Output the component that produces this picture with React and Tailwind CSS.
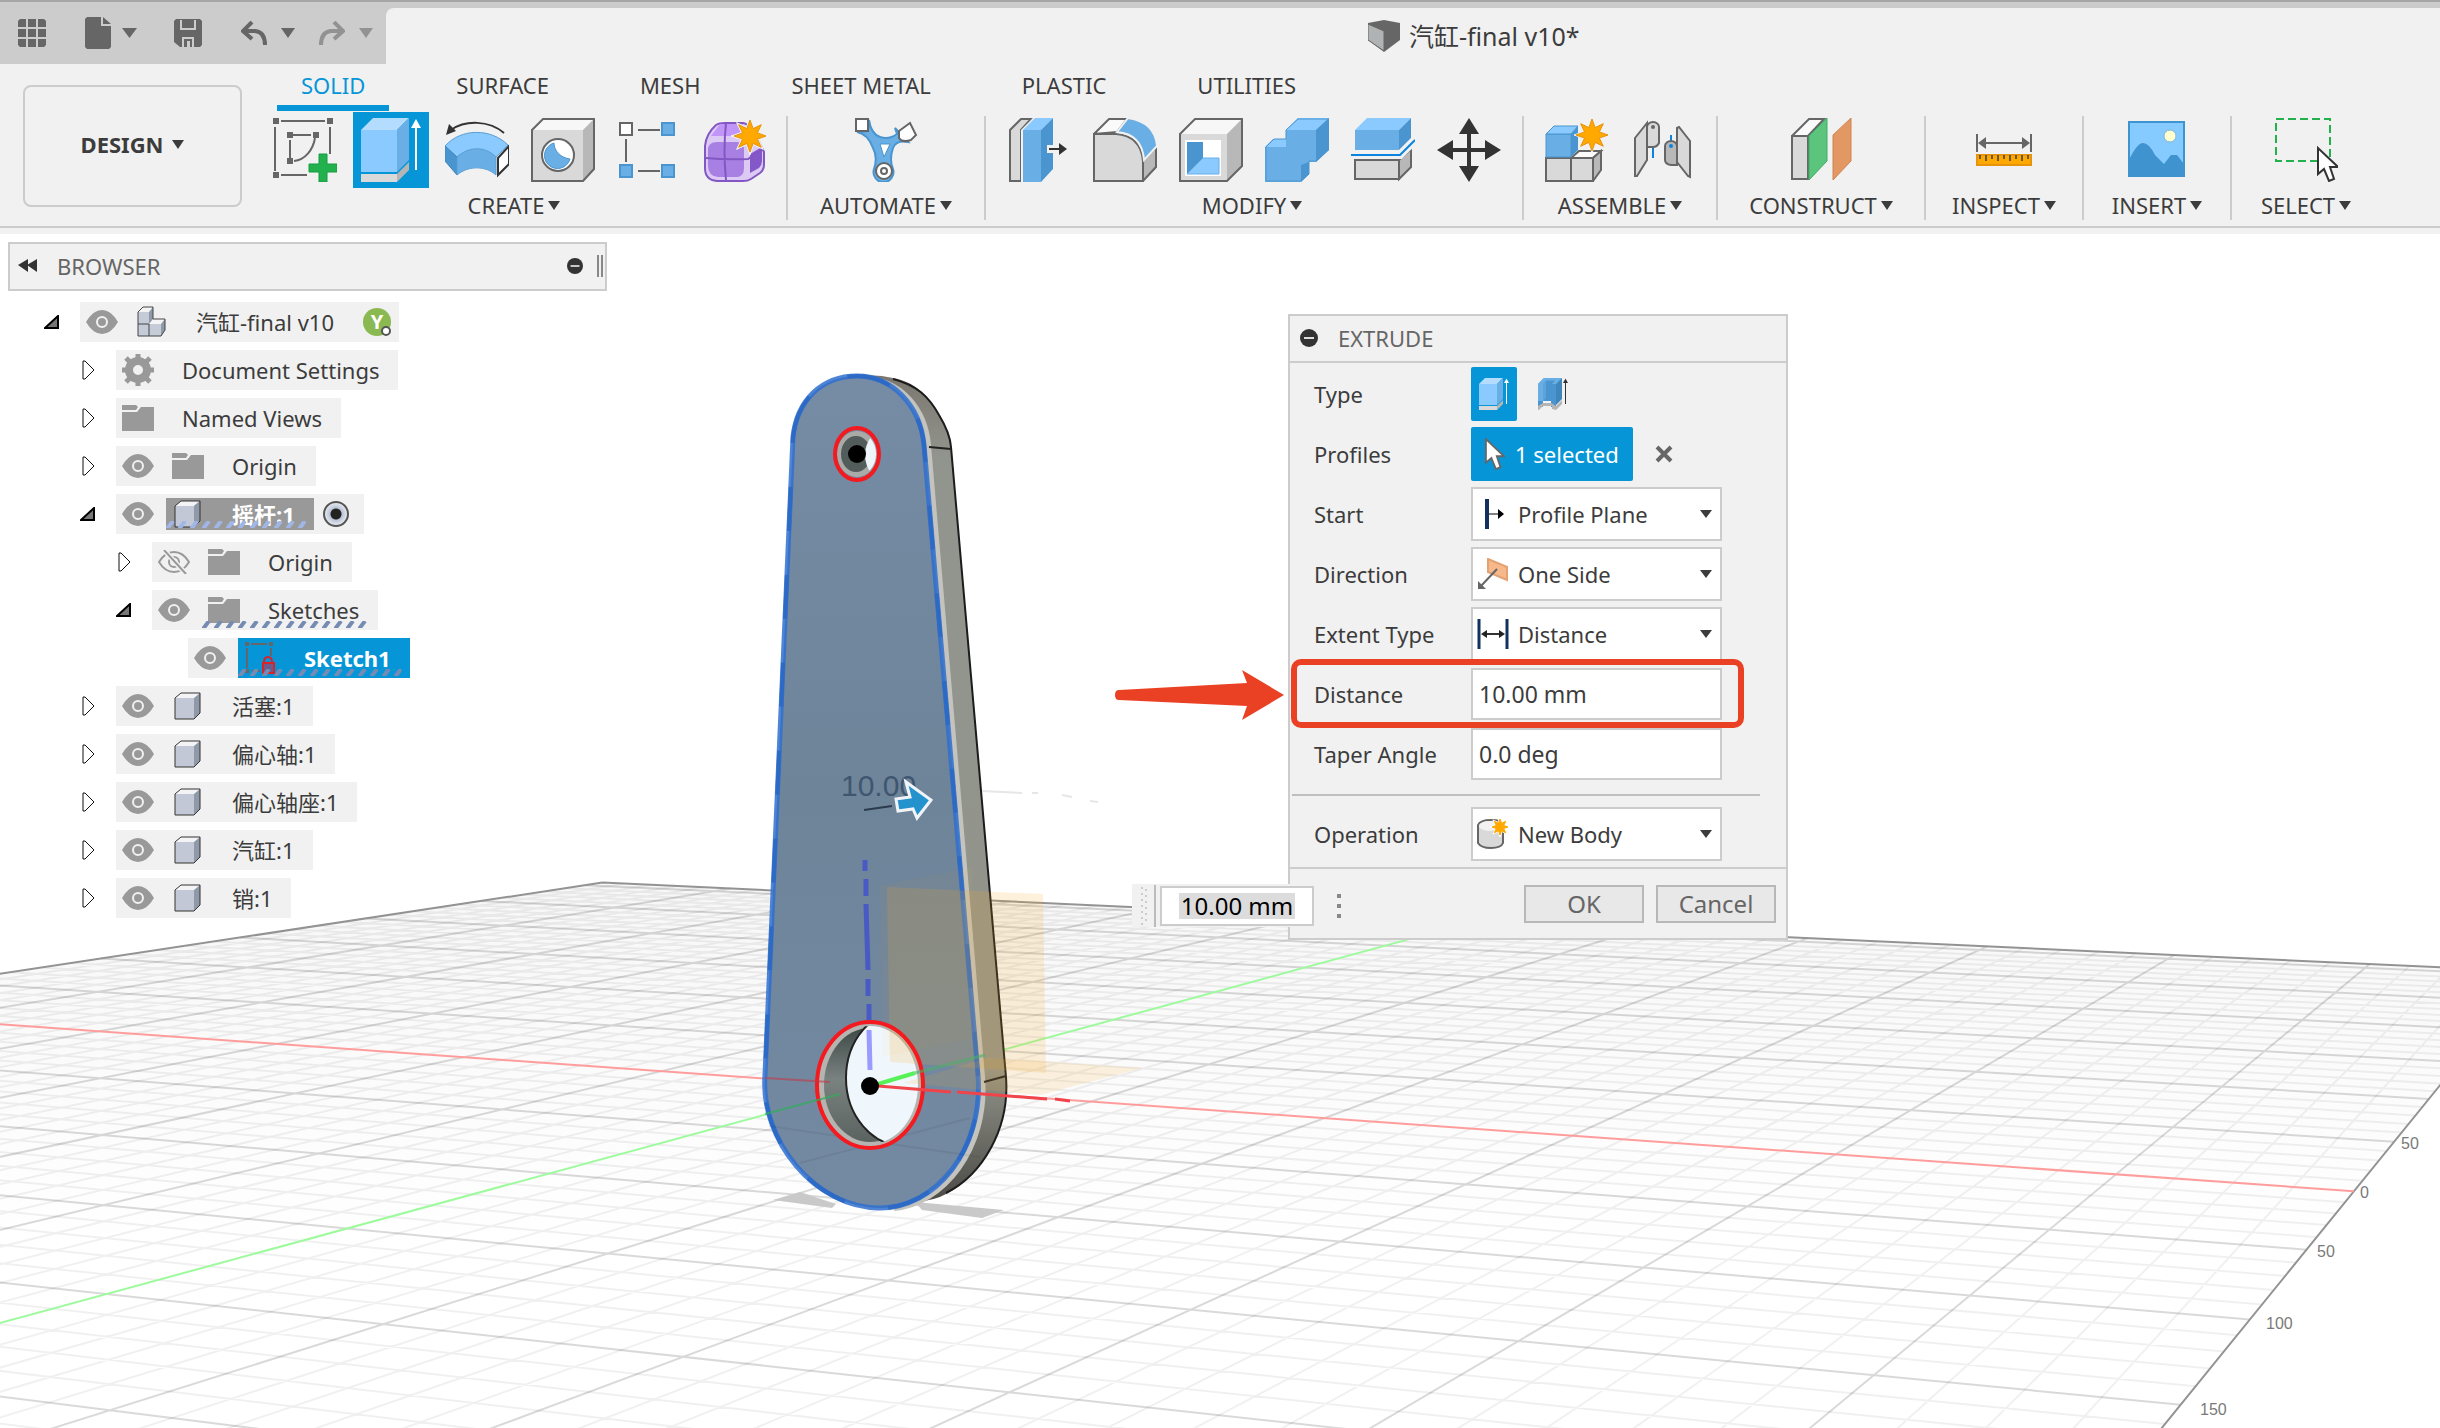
import React from "react";

/* ---------- shared drawing helpers ---------- */

function Star({ cx, cy, r, points = 8, fill = "#ffa800", stroke = "#e8930c", sw = 1 }) {
  const pts = [];
  for (let i = 0; i < points * 2; i++) {
    const a = (Math.PI * i) / points - Math.PI / 2;
    const d = i % 2 === 0 ? r : r * 0.5;
    pts.push(`${(cx + d * Math.cos(a)).toFixed(1)},${(cy + d * Math.sin(a)).toFixed(1)}`);
  }
  return <polygon points={pts.join(" ")} fill={fill} stroke={stroke} strokeWidth={sw} />;
}

function Icon({ children, className = "size-16", box = "0 0 64 64" }) {
  return (
    <svg viewBox={box} className={`${className} block shrink-0`} fill="none" aria-hidden="true">
      {children}
    </svg>
  );
}

const Caret = ({ className = "h-[9px] w-3" }) => (
  <svg viewBox="0 0 12 11" preserveAspectRatio="none" className={`${className} block shrink-0`} aria-hidden="true">
    <path d="M0 0h12l-6 11z" fill="currentColor" />
  </svg>
);

/* ---------- ribbon icons ---------- */

const SketchIcon = () => (
  <Icon>
    <path d="M8 3h44M2 9v44M8 57h26M57 9v27" stroke="#666" strokeWidth="2" />
    <path d="M20 17h18M17 22v18M42 20C40 32 32 42 21 43" stroke="#666" strokeWidth="2" />
    <path d="M0 0h6v6H0zM54 0h6v6h-6zM0 54h6v6H0zM14 14h6v6h-6zM40 14h6v6h-6zM14 40h6v6h-6z" fill="#666" />
    <path d="M46 36h8v10h10v8H54v10h-8V54H36v-8h10z" fill="#22b14c" stroke="#169b45" strokeWidth="1" />
  </Icon>
);
const ExtrudeIcon = ({ className, arrow = "#fff" }) => (
  <Icon className={className}>
    <path d="M2 12 14 0h36L38 12z" fill="#b3dcff" />
    <path d="M2 12h36v42H2z" fill="#8bcaff" />
    <path d="M38 12 50 0v42L38 54z" fill="#69afe5" />
    <path d="M2 56h36v8H2z" fill="#d9d9d9" />
    <path d="m38 56 12-12v8L38 64z" fill="#b5b5b5" />
    <path d="M57 8v44" stroke={arrow} strokeWidth="2" />
    <path d="m57 1 5 9H52z" fill={arrow} />
  </Icon>
);
const RevolveIcon = () => (
  <Icon>
    <path d="M0 28C16 10 46 10 63 27L51 39C40 29 24 29 12 39z" fill="#8bcaff" stroke="#5b9fd6" />
    <path d="M0 28 12 39v18L0 43z" fill="#4a95cf" stroke="#3f86bd" />
    <path d="M12 39C24 28 40 28 51 39v18C41 48 24 47 12 57z" fill="#69afe5" stroke="#5b9fd6" />
    <path d="m53 40 11-12v18L53 57z" fill="#fff" stroke="#333" strokeWidth="2" />
    <path d="M59 15C44 2 20 2 6 12" stroke="#333" strokeWidth="2" />
    <path d="m1 17 3-11 7 7z" fill="#333" />
  </Icon>
);
const HoleIcon = () => (
  <Icon>
    <path d="M1 12 12 1h51L52 12z" fill="#f7f7f7" />
    <path d="M52 12 63 1v50L52 63z" fill="#b8b8b8" />
    <path d="M1 12h51v51H1z" fill="#d9d9d9" />
    <path d="M1 12 12 1h51v50L52 63H1z" stroke="#666" strokeWidth="2" />
    <circle cx="27" cy="37" r="16" fill="#fff" stroke="#666" strokeWidth="2" />
    <path d="M23 25A13 13 0 1 0 39 41C30 40 23 33 23 25z" fill="#69afe5" stroke="#4a95cf" />
  </Icon>
);
const PatternIcon = () => (
  <Icon>
    <path d="M21 12h22M9 21v23M21 53h22" stroke="#666" strokeWidth="2" />
    <path d="M3 5h12v12H3z" fill="#fff" stroke="#666" strokeWidth="2" />
    <path d="M45 5h12v12H45zM3 47h12v12H3zM45 47h12v12H45z" fill="#69afe5" stroke="#4a95cf" strokeWidth="2" />
  </Icon>
);
const FormIcon = () => (
  <Icon>
    <path d="M2 28Q3 16 13 7q3-2 9-2h18q8 0 21 29v12q0 6-4 9l-9 6q-3 2-8 2H14Q2 62 2 50z" fill="#dccaf5" stroke="#8257c4" strokeWidth="2" />
    <path d="M8 18 17 6h23l-2 12z" fill="#c194f7" />
    <path d="M5 32q0-8 9-8h20q7 0 7 8v18q0 8-6 9H15Q5 58 5 48z" fill="#a880e3" />
    <path d="m47 36 12-7v14q0 4-3 7l-9 5z" fill="#8558c9" />
    <path d="M3 40q20 2 42 1l15-10M23 5q-3 28 0 57" stroke="#8257c4" strokeWidth="2" />
    <Star cx={47} cy={18} r={19} fill="#f1f1f1" stroke="#f1f1f1" />
    <Star cx={47} cy={18} r={16} />
  </Icon>
);
const AutomateIcon = () => (
  <Icon>
    <path d="M15 2Q17 16 26 19q9 3 17-3l-2-6 13 14q-12-2-15 6-4 12 0 21a10 10 0 1 1-19 0q4-12-1-21Q14 16 3 14l11-1z" fill="#69afe5" stroke="#4a95cf" strokeWidth="2" />
    <path d="M26 26h10l-6 13z" fill="#fff" stroke="#4a95cf" strokeWidth="1" />
    <path d="M2 1h12v12H2z" fill="#fff" stroke="#666" strokeWidth="2" />
    <path d="m45 13 11-8 6 12-5 5q-9 3-12-2z" fill="#fff" stroke="#666" strokeWidth="2" />
    <circle cx="30" cy="53" r="8" fill="#fff" stroke="#666" strokeWidth="2" />
    <circle cx="30" cy="53" r="3" fill="#fff" stroke="#666" strokeWidth="2" />
  </Icon>
);
const PressPullIcon = () => (
  <Icon>
    <path d="M3 12 14 1h10L14 12v51H3z" fill="#d9d9d9" stroke="#666" strokeWidth="2" />
    <path d="M14 12h2v52h-2zM14 12 26 0h2L16 12z" fill="#f1f1f1" />
    <path d="M16 12h18v52H16z" fill="#69afe5" />
    <path d="M16 12 28 0h18L34 12z" fill="#8bcaff" />
    <path d="M34 12 46 0v51L34 64z" fill="#4a95cf" />
    <path d="M40 27h9v-5l12 9-12 9v-5h-9z" fill="#f1f1f1" />
    <path d="M42 31h12" stroke="#333" strokeWidth="2" />
    <path d="m52 25 8 6-8 6z" fill="#333" />
  </Icon>
);
const FilletIcon = () => (
  <Icon>
    <path d="M1 16 16 1h18L24 14z" fill="#fafafa" stroke="#666" strokeWidth="2" />
    <path d="M1 16h22q25 2 27 27v20H1z" fill="#d9d9d9" stroke="#666" strokeWidth="2" />
    <path d="m50 42 13-13v20L50 63z" fill="#b8b8b8" stroke="#666" strokeWidth="2" />
    <path d="M24 14 35 0q27 4 29 28L51 42Q49 16 24 14z" fill="#69afe5" stroke="#f1f1f1" strokeWidth="2" />
  </Icon>
);
const ShellIcon = () => (
  <Icon>
    <path d="M1 16 16 1h47L48 16z" fill="#f7f7f7" />
    <path d="M48 16 63 1v47L48 63z" fill="#b8b8b8" />
    <path d="M1 16h47v47H1z" fill="#d9d9d9" />
    <path d="M1 16 16 1h47v47L48 63H1z" stroke="#666" strokeWidth="2" />
    <path d="M6 22h36v36H6z" fill="#fff" />
    <path d="M8 24h16v16L8 56z" fill="#4a95cf" />
    <path d="M24 40h16v16H8z" fill="#8bcaff" stroke="#69afe5" />
  </Icon>
);
const CombineIcon = () => (
  <Icon>
    <path d="M0 29 8 21h13V12L33 0h31v32L51 44h-7v12l-8 8H0z" fill="#69afe5" />
    <path d="M21 12 33 0h31L51 12zM0 29l8-8h13v8z" fill="#8bcaff" />
    <path d="M51 12 64 0v32L51 44zM36 47l8-3v12l-8 8z" fill="#4a95cf" />
    <path d="M1 29 9 21h12V12L33 1h30v31L51 43h-7v13l-8 7H1z" stroke="#4a95cf" strokeWidth="1" />
  </Icon>
);
const SplitIcon = () => (
  <Icon>
    <path d="M4 12 16 0h44L48 12z" fill="#8bcaff" />
    <path d="M4 12h44v20H4z" fill="#69afe5" />
    <path d="M48 12 60 0v20L48 32z" fill="#4a95cf" />
    <path d="M4 42h44v19H4z" fill="#d9d9d9" stroke="#666" strokeWidth="2" />
    <path d="m48 42 12-11v18L48 61z" fill="#b8b8b8" stroke="#666" strokeWidth="2" />
    <path d="M0 37h49l15-15" stroke="#f1f1f1" strokeWidth="8" />
    <path d="M0 37h49l15-15" stroke="#0a84e0" strokeWidth="2" />
  </Icon>
);
const MoveIcon = () => (
  <Icon>
    <path d="M32 8v48M8 32h48" stroke="#333" strokeWidth="4" />
    <path d="m32 0 10 16H22zM32 64 22 48h20zM0 32l16-10v20zM64 32 48 42V22z" fill="#333" />
  </Icon>
);
const AssembleIcon = () => (
  <Icon>
    <path d="M1 40h25v23H1z" fill="#d9d9d9" stroke="#666" strokeWidth="2" />
    <path d="M26 40 34 33h22l-8 7z" fill="#fafafa" stroke="#666" strokeWidth="2" />
    <path d="M26 40h22v23H26z" fill="#d9d9d9" stroke="#666" strokeWidth="2" />
    <path d="m48 40 8-7v19l-8 11z" fill="#b8b8b8" stroke="#666" strokeWidth="2" />
    <path d="M1 16h25v23H1z" fill="#69afe5" stroke="#4a95cf" />
    <path d="m1 16 8-8h24l-7 8z" fill="#8bcaff" stroke="#4a95cf" />
    <path d="m26 16 7-8v24l-7 7z" fill="#4a95cf" />
    <Star cx={47} cy={17} r={18} fill="#f1f1f1" stroke="#f1f1f1" />
    <Star cx={47} cy={17} r={16} />
  </Icon>
);
const JointIcon = () => (
  <Icon>
    <path d="m4 20 12-15v37L6 58H4z" fill="#d9d9d9" stroke="#666" strokeWidth="2" />
    <path d="M16 9a6 5 0 0 1 12 0v16q-2 4-6 4h-6z" fill="#d9d9d9" stroke="#666" strokeWidth="2" />
    <circle cx="22" cy="9" r="2" fill="#666" />
    <path d="M22 30v10M40 17v12" stroke="#0a84e0" strokeWidth="2" />
    <path d="m46 10 2-1 11 14v36l-2-1-11-14z" fill="#d9d9d9" stroke="#666" strokeWidth="2" />
    <path d="M34 28a6 5 0 0 1 12 0v19h-6q-6-1-6-5z" fill="#b8b8b8" stroke="#666" strokeWidth="2" />
    <circle cx="40" cy="28" r="2" fill="#0a84e0" />
  </Icon>
);
const ConstructIcon = () => (
  <Icon>
    <path d="M3 18 20 1h15L19 18v43H3z" fill="#fafafa" stroke="#666" strokeWidth="2" />
    <path d="M3 18h16v43H3z" fill="#d9d9d9" stroke="#666" strokeWidth="2" />
    <path d="M20 18 38 0v43L20 62z" fill="#5bc47d" stroke="#3fae66" />
    <path d="M44 17 62 0v43L44 62z" fill="#e39762" stroke="#cf8552" />
  </Icon>
);
const InspectIcon = () => (
  <Icon>
    <path d="M5 16v18M59 16v18M10 25h44" stroke="#666" strokeWidth="2" />
    <path d="m6 25 8-6v12zM58 25l-8-6v12z" fill="#666" />
    <path d="M5 37h54v10H5z" fill="#ffa800" stroke="#e8930c" strokeWidth="2" />
    <path d="M8 37v4M14 37v6M20 37v4M26 37v6M32 37v4M38 37v6M44 37v4M50 37v6M56 37v4" stroke="#6b5a35" strokeWidth="2" />
  </Icon>
);
const InsertIcon = () => (
  <Icon>
    <path d="M3 3h57v56H3z" fill="#86cbff" />
    <path d="M4 42q8-17 14-17 6 0 12 12l9 9 7-9h6l7 9v12H4z" fill="#3f93cf" />
    <circle cx="45" cy="18" r="6" fill="#ffffcf" stroke="#7fb7d8" strokeWidth="1" />
    <path d="M4 4h55v54H4z" stroke="#3f93cf" strokeWidth="2" />
  </Icon>
);
const CursorShape = () => <path d="M1 1v26l6-5 5 12 5-2-4-12h8z" />;
const SelectIcon = () => (
  <Icon>
    <path d="M2 1h54v42H2z" stroke="#22b14c" strokeWidth="2" strokeDasharray="8 4" />
    <g transform="translate(43 29)" fill="#fff" stroke="#333" strokeWidth="2">
      <CursorShape />
    </g>
  </Icon>
);

const GROUPS = [
  {
    label: "CREATE",
    width: "w-[534px]",
    nudge: "pr-3",
    icons: [
      ["Create Sketch", SketchIcon],
      ["Extrude", ExtrudeIcon, true],
      ["Revolve", RevolveIcon],
      ["Hole", HoleIcon],
      ["Rectangular Pattern", PatternIcon],
      ["Create Form", FormIcon],
    ],
  },
  { label: "AUTOMATE", width: "w-[198px]", icons: [["Automated Modeling", AutomateIcon]] },
  {
    label: "MODIFY",
    width: "w-[538px]",
    nudge: "pr-1",
    icons: [
      ["Press Pull", PressPullIcon],
      ["Fillet", FilletIcon],
      ["Shell", ShellIcon],
      ["Combine", CombineIcon],
      ["Split Body", SplitIcon],
      ["Move", MoveIcon],
    ],
  },
  {
    label: "ASSEMBLE",
    width: "w-[194px]",
    icons: [
      ["New Component", AssembleIcon],
      ["Joint", JointIcon],
    ],
  },
  { label: "CONSTRUCT", width: "w-[208px]", icons: [["Offset Plane", ConstructIcon]] },
  { label: "INSPECT", width: "w-[158px]", icons: [["Measure", InspectIcon]] },
  { label: "INSERT", width: "w-[148px]", icons: [["Insert Image", InsertIcon]] },
  { label: "SELECT", width: "w-[148px]", icons: [["Select", SelectIcon]] },
];

function ToolGroup({ label, width, icons, last, nudge = "" }) {
  return (
    <section className={`${width} flex shrink-0 flex-col items-center`}>
      <div className={`flex h-[104px] w-full flex-col items-center ${last ? "" : "border-r-2 border-[#ccc]"}`}>
        <div className="-mt-1 flex gap-[10px]">
          {icons.map(([name, Glyph, active]) => (
            <button
              key={name}
              type="button"
              aria-label={name}
              className={`flex size-[76px] items-center justify-center ${active ? "bg-[#0696d7]" : ""}`}
            >
              <Glyph />
            </button>
          ))}
        </div>
        <div className={`mt-[2px] ${nudge}`}>
          <button type="button" className="flex h-[30px] items-center gap-1 whitespace-nowrap">
            {label} <Caret />
          </button>
        </div>
      </div>
    </section>
  );
}

/* ---------- top bars ---------- */

function QuickBar() {
  return (
    <nav aria-label="Quick access" className="flex h-14 w-[386px] shrink-0 items-center bg-[#ccc] pb-[6px] pl-[18px] text-[#666]">
      <button type="button" aria-label="Data panel">
        <Icon className="size-7" box="0 0 28 28">
          <path
            d="M2 0h6v8H0V2zM10 0h8v8h-8zM20 0h6l2 2v6h-8zM0 10h8v8H0zM10 10h8v8h-8zM20 10h8v8h-8zM0 20h8v8H2l-2-2zM10 20h8v8h-8zM20 20h8v6l-2 2h-6z"
            fill="currentColor"
          />
        </Icon>
      </button>
      <button type="button" aria-label="File" className="ml-[39px] flex items-center gap-[11px]">
        <Icon className="h-8 w-[26px]" box="0 0 26 32">
          <path d="M2 0h14v9h10v21l-2 2H2l-2-2V2zM18 0l8 7h-8z" fill="currentColor" />
        </Icon>
        <Caret className="h-[10px] w-[15px]" />
      </button>
      <button type="button" aria-label="Save" className="ml-[37px]">
        <Icon className="size-7" box="0 0 28 28">
          <path d="M2 0h24l2 2v24l-2 2H6l-6-5V2z" fill="currentColor" />
          <path d="M7 1v9h14V1M9 28v-9h10v9" stroke="#ccc" strokeWidth="2" />
          <path d="M13 22h3v6h-3z" fill="#ccc" />
        </Icon>
      </button>
      <button type="button" aria-label="Undo" className="ml-[39px] flex items-center gap-[14px]">
        <Icon className="h-6 w-[26px]" box="0 0 26 24">
          <path d="M11 1 2 10l9 8M2 10h12q10 1 10 14" stroke="currentColor" strokeWidth="4" />
        </Icon>
        <Caret className="h-[10px] w-[14px]" />
      </button>
      <button type="button" aria-label="Redo" className="ml-6 flex items-center gap-[14px] text-[#929292]">
        <Icon className="h-6 w-[26px]" box="0 0 26 24">
          <path d="m15 1 9 9-9 8M24 10H12Q2 11 2 24" stroke="currentColor" strokeWidth="4" />
        </Icon>
        <Caret className="h-[10px] w-[14px]" />
      </button>
    </nav>
  );
}

const TABS = ["SOLID", "SURFACE", "MESH", "SHEET METAL", "PLASTIC", "UTILITIES"];

function Header() {
  return (
    <header className="relative z-10 bg-[#f1f1f1]">
      <div className="flex border-t-2 border-[#a6a6a6] bg-[#ccc] pt-[6px]">
        <QuickBar />
        <div className="flex h-14 flex-1 items-center rounded-tl-lg bg-[#f1f1f1] pl-[982px]">
          <Icon className="h-8 w-8" box="0 0 32 32">
            <path d="M0 3 16 0l16 3v17L16 32 0 20z" fill="#666" />
            <path d="m0 4 16 7v20L0 20z" fill="#b0b3b3" stroke="#666" />
          </Icon>
          <h1 className="ml-[9px] text-[25px] leading-8 whitespace-nowrap">汽缸-final v10*</h1>
        </div>
      </div>
      <div className="flex h-[164px] border-b-2 border-[#ccc] pl-[23px]">
        <button
          type="button"
          className="mt-[21px] flex h-[122px] w-[219px] shrink-0 items-center justify-center gap-[9px] rounded-lg border-2 border-[#ccc] pb-1 font-bold"
        >
          DESIGN <Caret />
        </button>
        <div className="flex flex-col pl-3">
          <div role="tablist" className="flex h-[47px] items-end gap-[43px] pl-[23px]">
            {TABS.map((t, i) => (
              <button
                key={t}
                type="button"
                role="tab"
                aria-selected={i === 0}
                className={`h-[41px] border-b-[6px] px-6 pb-[6px] leading-[30px] whitespace-nowrap ${
                  i === 0 ? "border-[#0696d7] text-[#0696d7]" : "border-transparent"
                }`}
              >
                {t}
              </button>
            ))}
          </div>
          <div className="flex pt-[5px]">
            {GROUPS.map((g, i) => (
              <ToolGroup key={g.label} {...g} last={i === GROUPS.length - 1} />
            ))}
          </div>
        </div>
      </div>
      <div className="h-[6px]" />
    </header>
  );
}

/* ---------- browser tree ---------- */

const Eye = () => (
  <Icon className="h-6 w-8" box="0 0 32 24">
    <path d="M0 12Q7 0 16 0t16 12Q25 24 16 24T0 12z" fill="#999" />
    <circle cx="16" cy="12" r="5" stroke="#f1f1f1" strokeWidth="2" />
  </Icon>
);
const EyeOff = () => (
  <Icon className="h-6 w-8" box="0 0 32 24">
    <path d="M1 12Q7 2 16 2t15 10Q25 22 16 22T1 12z" stroke="#999" strokeWidth="2" />
    <circle cx="16" cy="12" r="5" stroke="#999" strokeWidth="2" />
    <path d="m6 0 22 24" stroke="#f1f1f1" strokeWidth="5" />
    <path d="m6 0 22 24" stroke="#999" strokeWidth="2" />
  </Icon>
);
const Folder = () => (
  <Icon className="h-[26px] w-8" box="0 0 32 26">
    <path d="M0 0h14l2 2-2 3H0zM0 7h15l4-5h13v24H0z" fill="#999" />
  </Icon>
);
const Gear = () => (
  <Icon className="size-8" box="0 0 32 32">
    <circle cx="16" cy="16" r="9" stroke="#999" strokeWidth="8" />
    <path d="M16 0v6M16 26v6M0 16h6M26 16h6M4 4l5 5M23 23l5 5M4 28l5-5M23 9l5-5" stroke="#999" strokeWidth="5" />
  </Icon>
);
const Cube = () => (
  <Icon className="h-7 w-8" box="0 0 32 28">
    <path d="M3 6h19v21H3z" fill="#c3c8d6" />
    <path d="m3 6 6-5h19l-6 5z" fill="#f4f4f6" />
    <path d="m22 6 6-5v20l-6 6z" fill="#8f99a8" />
    <path d="m3 6 6-5h19v20l-6 6H3z" stroke="#333" strokeWidth="1" />
  </Icon>
);
const Assembly = () => (
  <Icon className="h-8 w-8" box="0 0 32 32">
    <path d="M2 6h11v24H2zM13 18h12v12H13z" fill="#c6cbd8" />
    <path d="m2 6 5-5h10l-4 5zM13 18l4-5h12l-4 5z" fill="#f4f4f6" />
    <path d="m13 6 4-5v12l-4 5zM25 18l4-5v11l-4 6z" fill="#8f99a8" />
    <path d="m2 6 5-5h10v12h12v11l-4 6H2zM2 18h11v12" stroke="#444" strokeWidth="1" />
  </Icon>
);
const LockedSketch = () => (
  <Icon className="h-[34px] w-8" box="0 0 32 34">
    <path d="M7 3h16M3 7v20M27 7v8M8 30h8" stroke="#666" strokeWidth="2" />
    <path d="M1 1h4v4H1zM25 1h4v4h-4zM1 28h4v4H1z" fill="#666" />
    <path d="M20 21q0-5 4-5t4 5" stroke="#d8232a" strokeWidth="2" />
    <path d="M19 22h11v10H19z" fill="#6b5b8e" stroke="#d8232a" strokeWidth="2" />
  </Icon>
);

const Hatch = ({ id, color }) => (
  <svg className="absolute bottom-[2px] left-0 h-[7px] w-[calc(100%-8px)]" aria-hidden="true">
    <pattern id={id} width="12" height="8" patternUnits="userSpaceOnUse">
      <path d="m1 8 6-8" stroke={color} strokeWidth="4" />
    </pattern>
    <rect width="100%" height="8" fill={`url(#${id})`} />
  </svg>
);

const TREE = [
  { indent: "pl-9", open: true, icon: Assembly, eye: Eye, text: "汽缸-final v10", badge: "user" },
  { indent: "pl-[72px]", icon: Gear, text: "Document Settings" },
  { indent: "pl-[72px]", icon: Folder, text: "Named Views" },
  { indent: "pl-[72px]", icon: Folder, eye: Eye, text: "Origin" },
  { indent: "pl-[72px]", open: true, icon: Cube, eye: Eye, text: "摇杆:1", badge: "radio", tone: "gray", hatch: "#9fb6e6" },
  { indent: "pl-[108px]", icon: Folder, eye: EyeOff, text: "Origin" },
  { indent: "pl-[108px]", open: true, icon: Folder, eye: Eye, text: "Sketches", hatch: "#768bb3" },
  { indent: "pl-36", leaf: true, icon: LockedSketch, eye: Eye, text: "Sketch1", tone: "blue", hatch: "#768bb3" },
  { indent: "pl-[72px]", icon: Cube, eye: Eye, text: "活塞:1" },
  { indent: "pl-[72px]", icon: Cube, eye: Eye, text: "偏心轴:1" },
  { indent: "pl-[72px]", icon: Cube, eye: Eye, text: "偏心轴座:1" },
  { indent: "pl-[72px]", icon: Cube, eye: Eye, text: "汽缸:1" },
  { indent: "pl-[72px]", icon: Cube, eye: Eye, text: "销:1" },
];

const TONES = {
  gray: "h-8 bg-[#999] font-bold text-white",
  blue: "h-10 bg-[#0696d7] font-bold text-white",
};

function TreeRow({ item, id }) {
  const { indent, open, leaf, icon: Glyph, eye: EyeGlyph, text, badge, tone, hatch } = item;
  return (
    <li className={`flex h-10 items-center ${indent}`}>
      {leaf ? (
        <span className="w-9" />
      ) : (
        <button type="button" aria-label={`Toggle ${text}`} aria-expanded={!!open} className="w-9">
          {open ? (
            <Icon className="h-[14px] w-[15px]" box="0 0 15 14">
              <path d="M1 13 14 1v12z" fill="#777" stroke="#000" strokeWidth="2" />
            </Icon>
          ) : (
            <Icon className="ml-[2px] h-5 w-[13px]" box="0 0 13 20">
              <path d="M1 1h2l9 9-9 9H1z" fill="#fff" stroke="#111" strokeWidth="1" />
            </Icon>
          )}
        </button>
      )}
      <div className="flex h-10 items-center bg-[#f1f1f1]">
        {EyeGlyph && (
          <button type="button" aria-label={`Show or hide ${text}`} className="w-[50px] pl-[6px]">
            <EyeGlyph />
          </button>
        )}
        <button type="button" className={`relative flex items-center pr-[19px] pl-[6px] whitespace-nowrap ${tone ? TONES[tone] : "h-10"}`}>
          <Glyph />
          <span className="ml-7 leading-8">{text}</span>
          {hatch && <Hatch id={id} color={hatch} />}
        </button>
        {badge === "user" && (
          <span className="relative mr-2 ml-[10px] flex size-7 items-center justify-center rounded-full bg-[#8ab851] text-[20px] leading-7 font-bold text-white">
            Y
            <span className="absolute right-0 bottom-0 size-[10px] rounded-full border-2 border-[#555] bg-white" />
          </span>
        )}
        {badge === "radio" && (
          <input
            type="radio"
            aria-label={`Activate ${text}`}
            defaultChecked
            className="mr-[15px] ml-[9px] size-[26px] appearance-none rounded-full border-2 border-[#555] bg-[radial-gradient(circle,#222_0_5px,#b9c3d6_6px,#e4e8ef_11px)]"
          />
        )}
      </div>
    </li>
  );
}

function MinusDot({ className }) {
  return (
    <Icon className={className} box="0 0 18 18">
      <circle cx="9" cy="9" r="9" fill="#333" />
      <path d="M4 9h10" stroke="#ddd" strokeWidth="2" />
    </Icon>
  );
}

function Browser() {
  return (
    <aside className="relative w-[607px] pt-2 pl-2">
      <div className="flex h-[49px] items-center border-2 border-[#ccc] bg-[#f1f1f1] pr-[2px] pb-[2px] pl-2 text-[#666]">
        <button type="button" aria-label="Collapse browser">
          <Icon className="h-[13px] w-[19px]" box="0 0 19 13">
            <path d="M10 0v13L0 6zM19 0v13L9 6z" fill="#333" />
          </Icon>
        </button>
        <h2 className="ml-5 flex-1">BROWSER</h2>
        <button type="button" aria-label="Minimize browser">
          <MinusDot className="size-4" />
        </button>
        <span className="ml-[14px] h-[22px] w-[6px] border-x-2 border-[#888]" />
      </div>
      <ul className="flex flex-col gap-2 pt-[11px]">
        {TREE.map((item, i) => (
          <TreeRow key={i} item={item} id={`hatch-${i}`} />
        ))}
      </ul>
    </aside>
  );
}

/* ---------- 3D scene ---------- */

// Projects a ground-plane point (in major grid cells) to scene coordinates.
function project(u, v) {
  const cu = -0.02795 * u;
  const cv = -0.0687 * v;
  const w = 1 + cu + cv;
  return [(870 - 6800 * cu + 2885 * cv) / w, (1086 + 542 * cu + 537 * cv) / w];
}
const U0 = -5.97;
const U1 = 5.8;
const V0 = -6.17;
const V1 = 6;

function segment(a, b) {
  const [x1, y1] = project(...a);
  const [x2, y2] = project(...b);
  return `M${x1.toFixed(1)} ${y1.toFixed(1)}L${x2.toFixed(1)} ${y2.toFixed(1)}`;
}
const gridLines = { major: "", minor: "" };
for (let k = -30; k <= 30; k++) {
  const t = k / 5;
  const kind = k % 5 === 0 ? "major" : "minor";
  if (k === 0) continue;
  if (t > U0 && t < U1) gridLines[kind] += segment([t, V0], [t, V1]);
  if (t > V0 && t < V1) gridLines[kind] += segment([U0, t], [U1, t]);
}
const BORDER = segment([U0, V1], [U0, V0]) + segment([U0, V0], [U1, V0]) + segment([U1, V0], [U1, V1]);
const X_AXIS = segment([U0, 0], [U1, 0]);
const Y_AXIS = segment([0, V0], [0, V1]);
const FACE = "M793 437C797 400 822 376 857 376C892 376 920 405 924 445L978 1075C984 1150 935 1208 880 1208C815 1208 760 1140 765 1075Z";

function Scene() {
  return (
    <svg viewBox="0 234 2440 1194" preserveAspectRatio="xMinYMin slice" className="absolute inset-0 size-full" fill="none" role="img" aria-label="Model view">
      <defs>
        <linearGradient id="face" x1="0" y1="0" x2="0" y2="1">
          <stop offset="0" stopColor="#768ca5" />
          <stop offset="0.5" stopColor="#6e8499" />
          <stop offset="1" stopColor="#748aa3" />
        </linearGradient>
        <linearGradient id="side" x1="0" y1="0" x2="0" y2="1">
          <stop offset="0" stopColor="#7b776e" />
          <stop offset="0.1" stopColor="#92958e" />
          <stop offset="0.84" stopColor="#92948b" />
          <stop offset="1" stopColor="#4b4a45" />
        </linearGradient>
        <linearGradient id="bore" x1="0" y1="0" x2="0" y2="1">
          <stop offset="0" stopColor="#3f4a48" />
          <stop offset="0.45" stopColor="#79827f" />
          <stop offset="1" stopColor="#5a6360" />
        </linearGradient>
        <linearGradient id="ground" x1="0" y1="882" x2="0" y2="1250" gradientUnits="userSpaceOnUse">
          <stop offset="0" stopColor="#f7f7f7" />
          <stop offset="1" stopColor="#fff" />
        </linearGradient>
        <clipPath id="boreClip">
          <ellipse cx="870" cy="1085" rx="48" ry="59" />
        </clipPath>
        <clipPath id="pinClip">
          <ellipse cx="857" cy="454" rx="19" ry="22" />
        </clipPath>
      </defs>

      <path
        d={`M${project(U0, V1)}L${project(U0, V0)}L${project(U1, V0)}L${project(U1, V1)}Z`}
        fill="url(#ground)"
      />
      <path d={gridLines.minor} stroke="#000" strokeOpacity="0.06" strokeWidth="2" />
      <path d={gridLines.major} stroke="#000" strokeOpacity="0.15" strokeWidth="2" />
      <path d={BORDER} stroke="#939393" strokeWidth="2" />
      <path d={X_AXIS} stroke="#ff9d9d" strokeWidth="2" />
      <path d={Y_AXIS} stroke="#9dfa9d" strokeWidth="2" />
      <g fill="#7a7a7a" fontFamily="Liberation Sans, sans-serif" fontSize="16">
        <text x="2401" y="1149">50</text>
        <text x="2360" y="1198">0</text>
        <text x="2317" y="1257">50</text>
        <text x="2266" y="1329">100</text>
        <text x="2200" y="1415">150</text>
      </g>

      <path d="m773 1200 27-8 36 12-4 4zM915 1202l89 8-22 8-60-8z" fill="#c9c9c9" />
      <path
        d="M857 376q20-2 36 2c22 4 36 18 46 36q11 18 12 32l55 630c4 52-24 100-60 118q-10 6-30 8z"
        fill="url(#side)"
      />
      <path d="M893 379c24 6 36 18 46 36q11 18 12 32l55 630c4 52-24 98-60 116" stroke="#1c1c1c" strokeWidth="2" />
      <path d="m862 379c40 0 63 32 66 66l54 632c6 72-40 127-88 131" stroke="#c4c3bd" strokeWidth="6" />
      <path d="m929 447 22 2M984 1082l22-6" stroke="#222" strokeWidth="2" />
      <path d={FACE} fill="url(#face)" />
      <path d={FACE} stroke="#1f4a8c" strokeWidth="4" strokeDasharray="44 44" />
      <path d={FACE} stroke="#2f70d0" strokeOpacity="0.85" strokeWidth="5" />
      <path d="M769 1126 980 1157M800 1163l170-45" stroke="#000" strokeOpacity="0.06" strokeWidth="2" />

      <ellipse cx="857" cy="454" rx="20" ry="23" fill="#a8aba8" />
      <ellipse cx="856" cy="454" rx="15" ry="18" fill="#525c5a" />
      <ellipse cx="887" cy="455" rx="22" ry="26" fill="#eef6fb" clipPath="url(#pinClip)" />
      <circle cx="857" cy="454" r="9" fill="#000" />
      <ellipse cx="857" cy="454" rx="22" ry="26" stroke="#f31a20" strokeWidth="4" />

      <ellipse cx="870" cy="1085" rx="52" ry="62" fill="#b5b4b0" />
      <ellipse cx="870" cy="1085" rx="46" ry="57" fill="url(#bore)" />
      <g clipPath="url(#boreClip)">
        <ellipse cx="904" cy="1078" rx="58" ry="68" fill="#f0f7fc" stroke="#222" strokeWidth="2" />
      </g>
      <path d="M887 887 1043 894 1046 1073 890 1062z" fill="#f7a823" fillOpacity="0.16" />
      <path d="M903 1083 987 1058 1143 1068 1040 1095z" fill="#f7a823" fillOpacity="0.14" />
      <path d="M880 885 972 868V1038L883 1057z" fill="#f7a823" fillOpacity="0.04" />
      <ellipse cx="870" cy="1085" rx="53" ry="63" stroke="#f31a20" strokeWidth="4" />

      <path d="M765 1078 830 1082" stroke="#c23a4a" strokeOpacity="0.6" strokeWidth="2" />
      <path d="m765 1114 75-20" stroke="#2fae5a" strokeOpacity="0.7" strokeWidth="2" />
      <path d="m878 1084 37-11" stroke="#57f257" strokeWidth="4" />
      <path d="m915 1073 70-18" stroke="#4fae6a" strokeOpacity="0.6" strokeWidth="3" />
      <path d="m878 1086 73 6m6 0 90 7m8 0 15 2" stroke="#f0434a" strokeWidth="3" />
      <path d="M865 860v11M866 879v17M866 904l2 66M868 979v17M869 1004v16" stroke="#4a5ac4" strokeWidth="5" />
      <path d="m869 1030 1 40" stroke="#9a9aff" strokeWidth="5" />
      <circle cx="870" cy="1086" r="9" fill="#000" />

      <text x="841" y="796" fontFamily="Liberation Sans, sans-serif" fontSize="30" fill="#3f5670">
        10.00
      </text>
      <path d="m864 810 28-4" stroke="#2b3a4d" strokeWidth="2" />
      <path d="m982 791 40 2m10 0 6 0m24 2 10 2m18 4 8 1" stroke="#e6e6e6" strokeWidth="2" />
      <path d="m896 799 14-2-4-15 25 18-14 18-4-9-15 2z" fill="#2492cc" stroke="#f0f4f8" strokeWidth="3" />
    </svg>
  );
}

/* ---------- extrude dialog ---------- */

const TypeWallIcon = () => (
  <Icon className="size-8">
    <path d="M2 12 14 0h36L38 12v46H28V46H12v12H2z" fill="#4a95cf" />
    <path d="M2 12 14 0h36L38 12h-8l6-7H18l-5 7v34H2z" fill="#69afe5" />
    <path d="M12 12 18 5v35l-6 6z" fill="#5ba3dc" />
    <path d="M38 12 50 0v42L38 54z" fill="#3f86bd" />
    <path d="M2 56l10-6h16l10 6 12-12v8L38 64l-8-2v-6H12l-8 8H2z" fill="#b5b5b5" />
    <path d="M57 8v44" stroke="#333" strokeWidth="2" />
    <path d="m57 1 5 9H52z" fill="#333" />
  </Icon>
);
const StartIcon = () => (
  <Icon className="size-8" box="0 0 32 32">
    <path d="M10 1v30" stroke="#14305f" strokeWidth="4" />
    <path d="M12 16h12" stroke="#000" strokeWidth="1" />
    <path d="m21 11 6 5-6 5z" fill="#000" />
  </Icon>
);
const DirectionIcon = () => (
  <Icon className="size-8" box="0 0 32 32">
    <path d="m11 1 19 8v13l-19-8z" fill="#f7b98a" stroke="#e2a273" strokeWidth="2" />
    <path d="M20 11 4 28" stroke="#666" strokeWidth="2" />
    <path d="M1 23v8h8z" fill="#666" />
  </Icon>
);
const ExtentIcon = () => (
  <Icon className="size-8" box="0 0 32 32">
    <path d="M2 1v30M30 1v30" stroke="#14305f" strokeWidth="3" />
    <path d="M6 16h20" stroke="#333" strokeWidth="2" />
    <path d="m4 16 6-4v8zM28 16l-6-4v8z" fill="#222" />
  </Icon>
);
const BodyIcon = () => (
  <Icon className="size-8" box="0 0 32 32">
    <path d="M1 7q2-5 13-5t12 5v18q-2 5-12 5T1 25z" fill="#d9d9d9" stroke="#666" strokeWidth="2" />
    <ellipse cx="13" cy="8" rx="11" ry="5" fill="#f2f2f2" />
    <Star cx={23} cy={9} r={10} fill="#fff" stroke="#fff" />
    <Star cx={23} cy={9} r={8} stroke="#ffa800" />
  </Icon>
);

function Row({ label, id, children, top = "pt-[6px]" }) {
  return (
    <div className={`flex items-center ${top}`}>
      {id ? (
        <label htmlFor={id} className="w-[157px] whitespace-nowrap">
          {label}
        </label>
      ) : (
        <span className="w-[157px]">{label}</span>
      )}
      {children}
    </div>
  );
}

function SelectBox({ id, value, icon: Glyph }) {
  return (
    <div className="relative w-[251px]">
      <select id={id} defaultValue={value} className="h-[54px] w-full appearance-none border-2 border-[#ccc] bg-white pr-8 pl-[45px]">
        <option>{value}</option>
      </select>
      <span className="pointer-events-none absolute inset-y-0 left-[6px] flex items-center">
        <Glyph />
      </span>
      <span className="pointer-events-none absolute inset-y-0 right-[10px] flex items-center">
        <Caret className="h-2 w-3" />
      </span>
    </div>
  );
}

const INPUT = "h-[52px] w-[251px] border-2 border-[#ccc] bg-white px-[6px] text-[23px]";

function ExtrudeDialog() {
  return (
    <form aria-label="Extrude" className="absolute top-20 left-[1288px] w-[500px] bg-[#f1f1f1]">
      <div className="flex h-[49px] items-center gap-5 border-2 border-[#ccc] pb-[2px] pl-[10px] text-[#666]">
        <button type="button" aria-label="Collapse dialog">
          <MinusDot className="size-[18px]" />
        </button>
        <h2>EXTRUDE</h2>
      </div>
      <div className="border-x-2 border-b-2 border-[#ccc] pb-[6px]">
        <div className="pl-6">
          <Row label="Type" top="pt-1">
            <button type="button" aria-label="Extrude" className="flex h-[54px] w-[46px] items-center justify-center rounded-xs bg-[#0696d7]">
              <ExtrudeIcon className="size-8" />
            </button>
            <button type="button" aria-label="Thin extrude" className="ml-5">
              <TypeWallIcon />
            </button>
          </Row>
          <Row label="Profiles">
            <button type="button" className="flex h-[54px] w-[162px] items-center gap-[10px] rounded-xs bg-[#0696d7] pl-[14px] whitespace-nowrap text-white">
              <Icon className="h-8 w-5" box="0 0 22 35">
                <g fill="#fff" stroke="#666" strokeWidth="2">
                  <CursorShape />
                </g>
              </Icon>
              1 selected
            </button>
            <button type="button" aria-label="Clear selection" className="ml-[22px]">
              <Icon className="size-[18px]" box="0 0 18 18">
                <path d="m2 2 14 14M16 2 2 16" stroke="#666" strokeWidth="4" />
              </Icon>
            </button>
          </Row>
          <Row label="Start" id="start">
            <SelectBox id="start" value="Profile Plane" icon={StartIcon} />
          </Row>
          <Row label="Direction" id="direction">
            <SelectBox id="direction" value="One Side" icon={DirectionIcon} />
          </Row>
          <Row label="Extent Type" id="extent">
            <SelectBox id="extent" value="Distance" icon={ExtentIcon} />
          </Row>
          <Row label="Distance" id="distance" top="pt-[7px]">
            <input id="distance" defaultValue="10.00 mm" className={INPUT} />
          </Row>
          <Row label="Taper Angle" id="taper" top="pt-2">
            <input id="taper" defaultValue="0.0 deg" className={INPUT} />
          </Row>
        </div>
        <hr className="mt-[14px] mr-[26px] ml-[2px] border-t-2 border-[#bfbfbf]" />
        <div className="pl-6">
          <Row label="Operation" id="operation" top="pt-[11px]">
            <SelectBox id="operation" value="New Body" icon={BodyIcon} />
          </Row>
        </div>
      </div>
      <div className="flex h-[71px] justify-end gap-3 border-x-2 border-b-2 border-[#ccc] pt-4 pr-[10px] text-[24px] text-[#666]">
        <button type="button" className="h-[38px] w-[120px] border-2 border-[#b8b8b8] bg-[#e8e8e8] leading-none">
          OK
        </button>
        <button type="button" className="h-[38px] w-[120px] border-2 border-[#b8b8b8] bg-[#e8e8e8] leading-none">
          Cancel
        </button>
      </div>
    </form>
  );
}

function FloatingDistance() {
  return (
    <div className="absolute top-[650px] left-[1132px] flex h-[43px] w-[230px] items-center bg-[#f1f1f1] pl-[9px]">
      <Icon className="h-10 w-2" box="0 0 8 40">
        <path d="M1 1v38M5 3v36" stroke="#ccc" strokeWidth="2" strokeDasharray="2 4" />
      </Icon>
      <span className="mr-1 ml-[5px] h-[42px] w-[2px] bg-[#bbb]" />
      <div className="flex h-10 w-[154px] items-center justify-center border-2 border-[#ccc] bg-white">
        <input aria-label="Extrude distance" defaultValue="10.00 mm" className="field-sizing-content bg-[#dcdcdc] px-[2px] text-[24px] leading-[26px] text-black" />
      </div>
      <button type="button" aria-label="More options" className="ml-[22px]">
        <Icon className="h-[26px] w-[6px]" box="0 0 6 26">
          <path d="M1 1h4v4H1zM1 11h4v4H1zM1 21h4v4H1z" fill="#888" />
        </Icon>
      </button>
    </div>
  );
}

function Callout() {
  return (
    <>
      <svg viewBox="0 0 170 52" className="pointer-events-none absolute top-[435px] left-[1115px] h-[52px] w-[170px]" aria-hidden="true">
        <path d="M4 21 132 14 127 1 169 26 127 51 132 37 4 31Q0 31 0 26T4 21z" fill="#ea4125" />
      </svg>
      <div className="pointer-events-none absolute top-[425px] left-[1291px] h-[69px] w-[453px] rounded-[10px] border-[6px] border-[#ea4125]" />
    </>
  );
}

export default function App() {
  return (
    <div className="flex min-h-screen flex-col overflow-hidden bg-white font-['Noto_Sans','Noto_Sans_CJK_SC',sans-serif] text-[22px] leading-[30px] text-[#3c3c3c]">
      <Header />
      <main className="relative flex-1 overflow-hidden">
        <Scene />
        <Browser />
        <ExtrudeDialog />
        <FloatingDistance />
        <Callout />
      </main>
    </div>
  );
}
